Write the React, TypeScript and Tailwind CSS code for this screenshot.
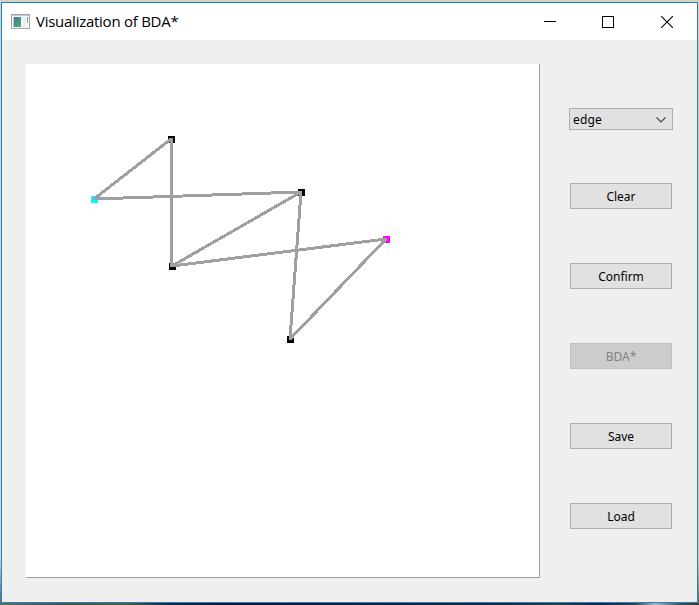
type Point = { x: number; y: number; color: string };

const points: Point[] = [
  { x: 145, y: 75, color: '#000000' },
  { x: 68, y: 135, color: '#00ffff' },
  { x: 275, y: 128, color: '#000000' },
  { x: 146, y: 202, color: '#000000' },
  { x: 264, y: 275, color: '#000000' },
  { x: 360, y: 175, color: '#ff00ff' },
];

const edges: [number, number][] = [[0, 1], [1, 2], [0, 3], [2, 3], [3, 5], [2, 4], [4, 5]];

function Graph() {
  return (
    <svg width="513" height="513" shapeRendering="crispEdges" className="block">
      {points.map((p, i) => (
        <rect key={i} x={p.x - 3} y={p.y - 3} width="7" height="7" fill={p.color} />
      ))}
      {edges.map(([a, b], i) => {
        const vertical = a === 0 && b === 3;
        const offset = vertical ? 0.5 : 0;
        return (
          <line
            key={i}
            x1={points[a].x + offset}
            y1={points[a].y}
            x2={vertical ? points[a].x + offset : points[b].x}
            y2={points[b].y}
            stroke="#a0a0a4"
            strokeWidth="3"
            strokeLinecap="round"
          />
        );
      })}
    </svg>
  );
}

function TitleBar() {
  return (
    <header className="flex h-[37px] shrink-0 items-center bg-white pl-[9px]">
      <svg width="19" height="15" className="mb-px shrink-0" shapeRendering="crispEdges">
        <defs>
          <linearGradient id="pane" x1="0" y1="0" x2="1" y2="1">
            <stop offset="0" stopColor="#4778a0" />
            <stop offset="0.5" stopColor="#489781" />
            <stop offset="1" stopColor="#59a966" />
          </linearGradient>
          <linearGradient id="strip" x1="0" y1="0" x2="0" y2="1">
            <stop offset="0" stopColor="#5f8fae" />
            <stop offset="1" stopColor="#8fc29c" />
          </linearGradient>
        </defs>
        <rect x="0.5" y="0.5" width="18" height="14" fill="#f5f6f7" stroke="#a2a6aa" />
        <rect x="1" y="1" width="17" height="1" fill="#c5c8cc" />
        <rect x="2" y="3" width="1" height="10" fill="#b9cbd2" />
        <rect x="3" y="3" width="7" height="10" fill="url(#pane)" />
        <rect x="12" y="3" width="3" height="10" fill="#eceff1" />
        <rect x="16" y="3" width="1" height="6" fill="url(#strip)" />
      </svg>
      <h1 className="ml-[6px] w-[144px] whitespace-nowrap pb-[2px] text-[15px] leading-5 tracking-[-0.26px] text-black">Visualization of BDA*</h1>
      <div className="ml-auto flex">
        <button aria-label="Minimize" className="flex h-[37px] w-[58px] items-center justify-center">
          <svg width="12" height="12" shapeRendering="crispEdges"><path d="M0 5.5H12" stroke="#000" /></svg>
        </button>
        <button aria-label="Maximize" className="flex h-[37px] w-[58px] items-center justify-center">
          <svg width="12" height="12" shapeRendering="crispEdges"><rect x=".5" y=".5" width="11" height="11" fill="none" stroke="#000" /></svg>
        </button>
        <button aria-label="Close" className="flex h-[37px] w-[60px] items-center justify-center">
          <svg width="12" height="12"><path d="M0 0L12 12M12 0L0 12" stroke="#000" strokeWidth="1.1" /></svg>
        </button>
      </div>
    </header>
  );
}

const buttons = ['Clear', 'Confirm', 'BDA*', 'Save', 'Load'];

export default function App() {
  return (
    <div className="flex h-[605px] w-[699px] flex-col bg-[linear-gradient(to_bottom,#d5d4c3_0px,#d5d4c3_560px,#6b6a55_600px)] pt-[2px] font-['Open_Sans','Noto_Sans',sans-serif]">
      <div className="mx-px flex min-h-0 flex-1 flex-col border border-[#1883d7] bg-[#efefef]">
        <TitleBar />
        <main className="flex min-h-0 flex-1">
          <section className="mt-[24px] ml-[24px] h-[514px] w-[514px] border-r border-b border-[#a0a0a0] bg-white">
            <Graph />
          </section>
          <aside className="ml-[29px] flex w-[104px] flex-col items-center pt-[68px] font-['Noto_Sans',sans-serif] text-[12px]">
            <button className="flex h-[22px] w-[104px] items-center justify-between border border-[#adadad] bg-[#e1e1e1] pr-[6px] pl-[3px] leading-4">
              <span className="pt-[2px] tracking-[0.15px]">edge</span>
              <svg width="10" height="6" className="mt-px"><path d="M.5 .5L5 5L9.5 .5" fill="none" stroke="#444" strokeWidth="1.1" /></svg>
            </button>
            <div className="mt-[53px] flex flex-col gap-[54px]">
              {buttons.map((label) => (
                <button
                  key={label}
                  disabled={label === 'BDA*'}
                  className="flex h-[26px] w-[102px] items-center justify-center border border-[#adadad] bg-[#e1e1e1] pt-[2px] leading-4 text-black disabled:border-[#bfbfbf] disabled:bg-[#cccccc] disabled:text-[#838383]"
                >
                  {label}
                </button>
              ))}
            </div>
          </aside>
        </main>
      </div>
      <div className="h-[2px] shrink-0 bg-[linear-gradient(to_right,#6b6a55_0px,#4f5038_60px,#5d5a2c_125px,#1c2430_170px,#0c1420_230px,#20262a_500px,#3a3c28_560px,#1a2238_600px,#3c4030_635px,#b5b8b0_655px,#4a4c38_680px,#3c3f2c_699px)]" />
    </div>
  );
}
